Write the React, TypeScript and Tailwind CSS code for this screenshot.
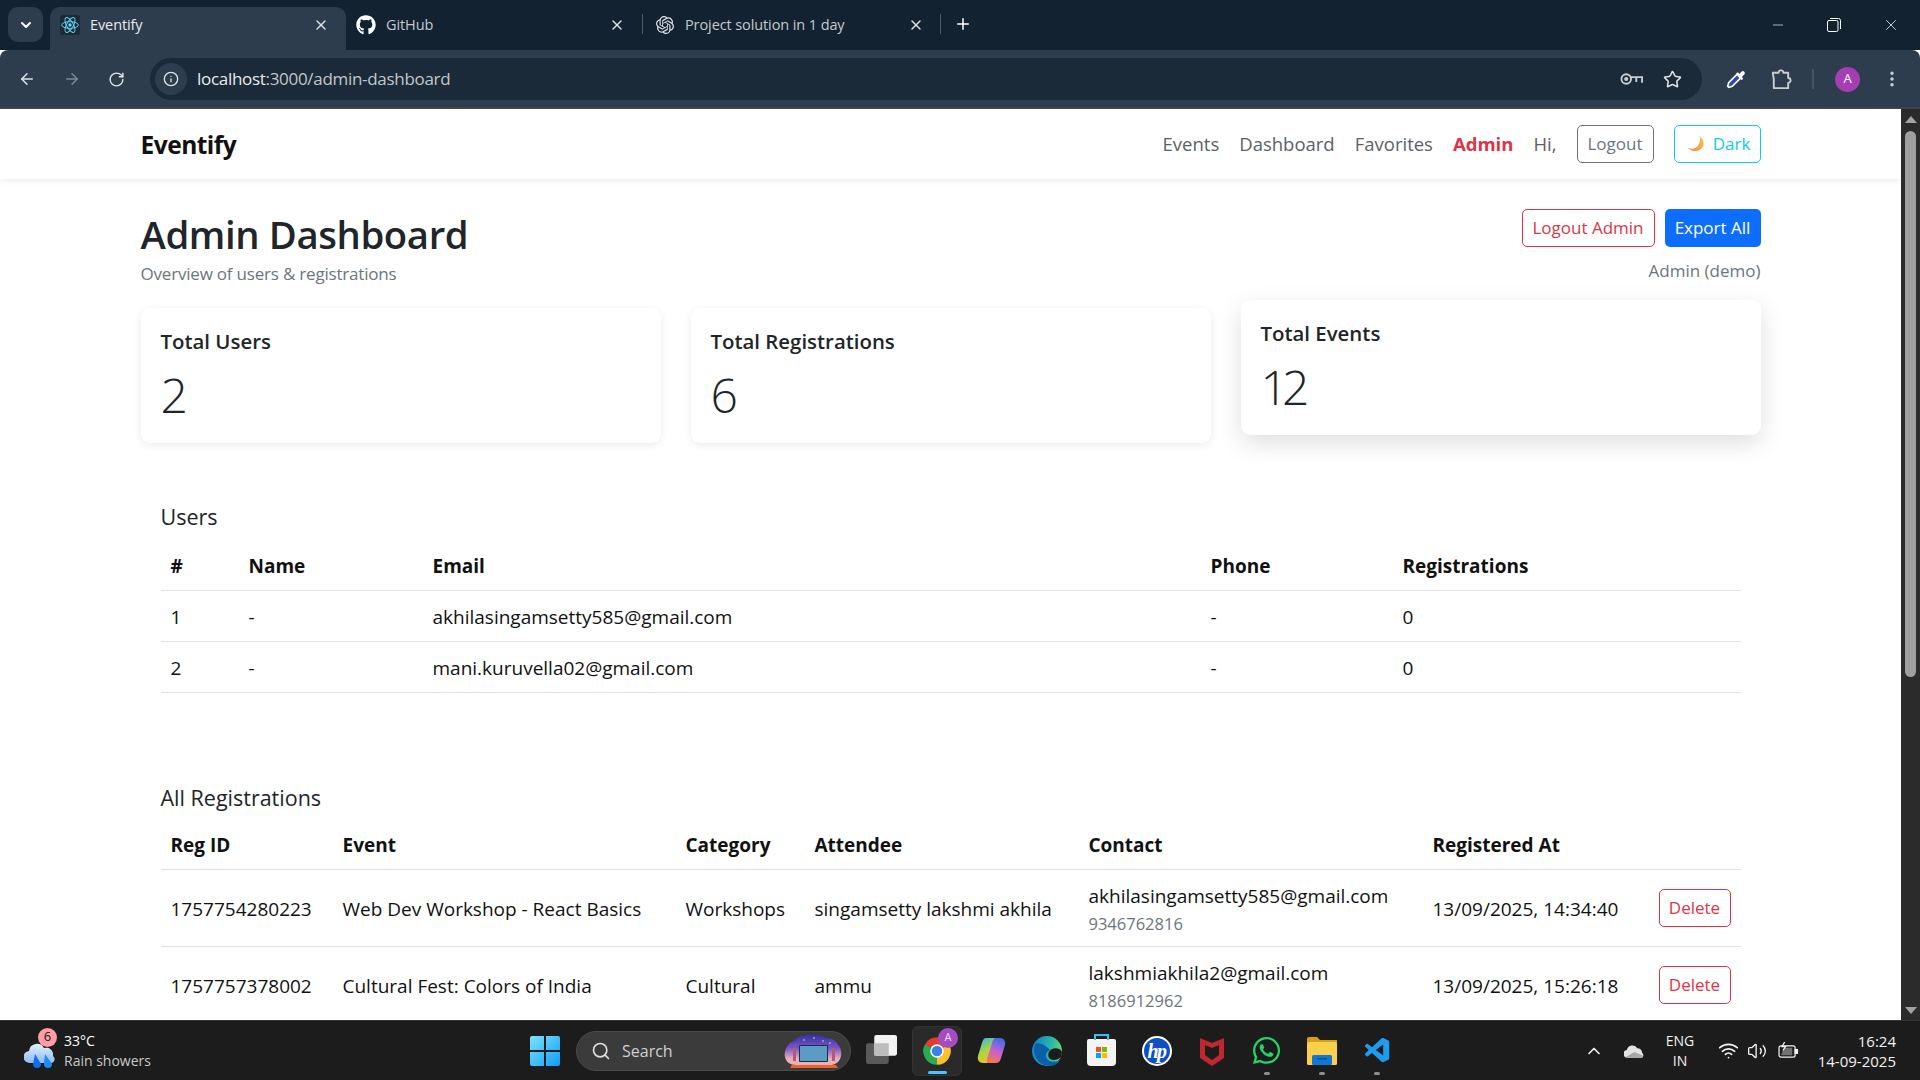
import React from 'react';
import { ArrowLeft, ArrowRight, RotateCw, Info, Star, EllipsisVertical, Plus, X, ChevronDown, ChevronUp, Minus, Search, Wifi, Volume2 } from 'lucide-react';
import { FaGithub, FaWhatsapp } from 'react-icons/fa';
import { SiOpenai } from 'react-icons/si';
import { VscVscode } from 'react-icons/vsc';

const users = [
  { id: 1, name: '-', email: 'akhilasingamsetty585@gmail.com', phone: '-', regs: 0 },
  { id: 2, name: '-', email: 'mani.kuruvella02@gmail.com', phone: '-', regs: 0 },
];

const registrations = [
  {
    id: '1757754280223',
    event: 'Web Dev Workshop - React Basics',
    category: 'Workshops',
    attendee: 'singamsetty lakshmi akhila',
    email: 'akhilasingamsetty585@gmail.com',
    phone: '9346762816',
    at: '13/09/2025, 14:34:40',
  },
  {
    id: '1757757378002',
    event: 'Cultural Fest: Colors of India',
    category: 'Cultural',
    attendee: 'ammu',
    email: 'lakshmiakhila2@gmail.com',
    phone: '8186912962',
    at: '13/09/2025, 15:26:18',
  },
];

function ReactIcon() {
  return (
    <svg viewBox="0 0 24 24" className="w-[20px] h-[20px] bg-[#1f2933] rounded-[3px]">
      <g fill="none" stroke="#61dafb" strokeWidth="1.1">
        <ellipse cx="12" cy="12" rx="10" ry="4" />
        <ellipse cx="12" cy="12" rx="10" ry="4" transform="rotate(60 12 12)" />
        <ellipse cx="12" cy="12" rx="10" ry="4" transform="rotate(120 12 12)" />
      </g>
      <circle cx="12" cy="12" r="2" fill="#61dafb" />
    </svg>
  );
}

function Tab({ icon, title, active }: { icon: React.ReactNode; title: string; active?: boolean }) {
  return (
    <div
      className={`flex items-center h-[43px] w-[296px] pl-[10px] pr-[17px] pb-[8px] rounded-t-[10px] ${
        active ? 'bg-[#2d3d4d] text-[#e8eaed]' : 'text-[#c4c9ce]'
      }`}
    >
      <span className="w-[20px] flex justify-center">{icon}</span>
      <span className="ml-[10px] flex-1 text-[14.5px] tracking-[-0.1px]">{title}</span>
      <X size={16} strokeWidth={2} className="text-[#dfe3e6]" />
    </div>
  );
}

function BrowserChrome() {
  return (
    <div className="shrink-0">
      {/* Tab strip */}
      <div className="h-[50px] bg-[#132231] flex items-end">
        <div className="ml-[8px] mb-[8px] w-[35px] h-[35px] rounded-[10px] bg-[#2d3d4d] flex items-center justify-center text-white">
          <ChevronDown size={16} strokeWidth={3} />
        </div>
        <div className="ml-[7px]">
          <Tab active icon={<ReactIcon />} title="Eventify" />
        </div>
        <Tab icon={<FaGithub size={20} className="text-white" />} title="GitHub" />
        <div className="w-px h-[20px] bg-[#4a5967] mb-[16px] mr-[2px]" />
        <Tab icon={<SiOpenai size={18} className="text-[#e0e3e6]" />} title="Project solution in 1 day" />
        <div className="w-px h-[20px] bg-[#4a5967] mb-[16px] -ml-px" />
        <Plus size={18} strokeWidth={2} className="ml-[13px] mb-[17px] text-white" />
        <div className="ml-auto flex items-center h-full text-white">
          <Minus size={16} strokeWidth={1} className="mr-[41px]" />
          <svg viewBox="0 0 14 14" className="w-[14px] h-[14px] mr-[41px]" fill="none" stroke="white" strokeWidth="1">
            <rect x="0.5" y="2.5" width="10.5" height="11" rx="1.5" />
            <path d="M3 0.5h8.5a2 2 0 0 1 2 2V11" />
          </svg>
          <X size={18} strokeWidth={1} className="mr-[20px]" />
        </div>
      </div>
      {/* Toolbar */}
      <div className="h-[59px] bg-[#2d3d4d] border-b-2 border-[#3c4650] rounded-t-[8px] flex items-start pt-[8px] text-[#dfe3e6]">
        <div className="flex items-center h-[42px] pl-[18px] gap-[27px] w-[150px]">
          <ArrowLeft size={18} strokeWidth={2} />
          <ArrowRight size={18} strokeWidth={2} className="text-[#7d8893]" />
          <RotateCw size={17} strokeWidth={2} />
        </div>
        <div className="w-[1552px] h-[42px] rounded-full bg-[#1a2a38] flex items-center pl-[5px] pr-[20px]">
          <div className="w-[32px] h-[32px] rounded-full bg-[#2d3d4d] flex items-center justify-center">
            <Info size={16} strokeWidth={2} />
          </div>
          <span className="ml-[10px] text-[17px] tracking-[-0.3px] text-[#e8eaed]">
            localhost<span className="text-[#c2c7cc]">:3000/admin-dashboard</span>
          </span>
          <svg viewBox="0 0 24 14" className="ml-auto w-[23px] h-[14px]" fill="none" stroke="#c9cdd1" strokeWidth="2">
            <circle cx="6.5" cy="7" r="5" />
            <circle cx="6.5" cy="7" r="1.2" fill="#c9cdd1" />
            <path d="M11.5 5h11.5v6M17 5v5" />
          </svg>
          <Star size={19} strokeWidth={2} className="ml-[20px] text-[#dfe3e6]" />
        </div>
        <div className="flex items-center h-[42px] ml-[23px]">
          <svg viewBox="0 0 24 24" className="w-[22px] h-[22px]">
            <path d="M4 21l-1-1 1-4L14 6l4 4L8 20z" fill="#2f48b8" stroke="white" strokeWidth="1.8" />
            <path d="M13 5l2 2 3-3a2 2 0 0 1 3 3l-3 3 2 2-2 1-6-6z" fill="white" />
          </svg>
          <svg viewBox="0 0 24 24" className="ml-[22px] w-[23px] h-[23px]" fill="none" stroke="#c9cdd1" strokeWidth="2" strokeLinejoin="round">
            <path d="M4 5h6a2.5 2.5 0 0 1 5 0h5v5.5a2.5 2.5 0 0 1 0 5V21H5v-4a0 0 0 0 0 0 0v-5a0 0 0 0 0 0 0z" />
          </svg>
          <div className="w-[2px] h-[20px] bg-[#465563] ml-[20px]" />
          <div className="ml-[21px] w-[25px] h-[25px] rounded-full bg-[#a43fb1] text-white text-[13px] flex items-center justify-center">
            A
          </div>
          <EllipsisVertical size={20} strokeWidth={2.2} className="ml-[22px] text-[#c9cdd1]" />
        </div>
      </div>
    </div>
  );
}

function Navbar() {
  return (
    <div className="h-[70px] shrink-0 bg-white shadow-[0_2px_6px_rgba(0,0,0,0.07)] relative">
      <div className="w-[1620px] mx-auto h-full flex items-center justify-between">
        <span className="pt-[2px] text-[24.5px] font-bold text-[#111] tracking-[-0.5px]">Eventify</span>
        <div className="flex items-center text-[#5c6166] text-[18.5px]">
          <span>Events</span>
          <span className="ml-[20px]">Dashboard</span>
          <span className="ml-[20px]">Favorites</span>
          <span className="ml-[20px] font-bold text-[#dc3545]">Admin</span>
          <span className="ml-[20px]">Hi,</span>
          <button className="ml-[20px] h-[38px] w-[77px] rounded-[5px] border border-[#6c757d] text-[#6c757d] text-[17px]">
            Logout
          </button>
          <button className="ml-[20px] h-[38px] w-[87px] pl-[3px] rounded-[5px] border border-[#0dcaf0] text-[#0dcaf0] text-[17px] flex items-center justify-center gap-[8px]">
            <svg viewBox="0 0 20 20" className="w-[18px] h-[18px]">
              <defs>
                <linearGradient id="moon" x1="1" y1="0" x2="0" y2="1">
                  <stop offset="0" stopColor="#f7c24f" />
                  <stop offset="1" stopColor="#ee8f4a" />
                </linearGradient>
              </defs>
              <path d="M14 1c5 4 6 10 2 14-4 4-11 4-15-.5 5 2 9 .5 11.5-3C14.500 8 15 4.500 14 1z" fill="url(#moon)" />
            </svg>
            Dark
          </button>
        </div>
      </div>
    </div>
  );
}

function StatCard({ title, value, raised }: { title: string; value: number; raised?: boolean }) {
  return (
    <div
      className={`h-[135px] rounded-[9px] bg-white p-[20px] ${
        raised ? '-translate-y-[8px] shadow-[0_8px_24px_rgba(0,0,0,0.13)]' : 'shadow-[0_2px_8px_rgba(0,0,0,0.08)]'
      }`}
    >
      <div className="text-[20.400px] font-semibold text-[#212529] leading-[26px]">{title}</div>
      <div className="mt-[12px] text-[48px] font-light text-[#212529] leading-[58px] tracking-[-6px]">{value}</div>
    </div>
  );
}

function UsersTable() {
  return (
    <table className="w-[1580px] table-fixed text-left text-[19px] text-[#111]">
      <colgroup>
        <col className="w-[78px]" />
        <col className="w-[184px]" />
        <col className="w-[778px]" />
        <col className="w-[192px]" />
        <col />
      </colgroup>
      <thead>
        <tr className="h-[50px] border-b border-[#dee2e6]">
          <th className="px-[10px] pt-[2px] font-bold">#</th>
          <th className="px-[10px] pt-[2px] font-bold">Name</th>
          <th className="px-[10px] pt-[2px] font-bold">Email</th>
          <th className="px-[10px] pt-[2px] font-bold">Phone</th>
          <th className="px-[10px] pt-[2px] font-bold">Registrations</th>
        </tr>
      </thead>
      <tbody>
        {users.map((u) => (
          <tr key={u.id} className="h-[51px] border-b border-[#dee2e6]">
            <td className="px-[10px] pt-[3px]">{u.id}</td>
            <td className="px-[10px] pt-[3px]">{u.name}</td>
            <td className="px-[10px] pt-[3px]">{u.email}</td>
            <td className="px-[10px] pt-[3px]">{u.phone}</td>
            <td className="px-[10px] pt-[3px]">{u.regs}</td>
          </tr>
        ))}
      </tbody>
    </table>
  );
}

function RegistrationsTable() {
  return (
    <table className="w-[1580px] table-fixed text-left text-[19px] text-[#111]">
      <colgroup>
        <col className="w-[172px]" />
        <col className="w-[343px]" />
        <col className="w-[129px]" />
        <col className="w-[274px]" />
        <col className="w-[344px]" />
        <col className="w-[217px]" />
        <col />
      </colgroup>
      <thead>
        <tr className="h-[49px] border-b border-[#dee2e6]">
          <th className="px-[10px] font-bold">Reg ID</th>
          <th className="px-[10px] font-bold">Event</th>
          <th className="px-[10px] font-bold">Category</th>
          <th className="px-[10px] font-bold">Attendee</th>
          <th className="px-[10px] font-bold">Contact</th>
          <th className="px-[10px] font-bold">Registered At</th>
          <th />
        </tr>
      </thead>
      <tbody>
        {registrations.map((r) => (
          <tr key={r.id} className="h-[77px] border-b border-[#dee2e6]">
            <td className="px-[10px] pt-[3px]">{r.id}</td>
            <td className="px-[10px] pt-[3px] whitespace-nowrap">{r.event}</td>
            <td className="px-[10px] pt-[3px]">{r.category}</td>
            <td className="px-[10px] pt-[3px] whitespace-nowrap">{r.attendee}</td>
            <td className="px-[10px] pt-[3px]">
              <div className="leading-[28px] whitespace-nowrap">{r.email}</div>
              <div className="leading-[28px] text-[16.500px] text-[#6c757d]">{r.phone}</div>
            </td>
            <td className="px-[10px] pt-[3px] whitespace-nowrap">{r.at}</td>
            <td className="pl-[19px]">
              <button className="w-[72px] h-[38px] rounded-[5px] border border-[#dc3545] text-[#dc3545] text-[17px]">
                Delete
              </button>
            </td>
          </tr>
        ))}
      </tbody>
    </table>
  );
}

function Scrollbar() {
  return (
    <div className="w-[19px] shrink-0 bg-[#2b2b2b] flex flex-col items-center">
      <div className="mt-[7px] w-0 h-0 border-x-[6px] border-x-transparent border-b-[7px] border-b-[#a3a3a3]" />
      <div className="mt-[8px] w-[11px] h-[546px] rounded-full bg-[#9f9f9f]" />
      <div className="mt-auto mb-[6px] w-0 h-0 border-x-[6px] border-x-transparent border-t-[7px] border-t-[#a3a3a3]" />
    </div>
  );
}

function WeatherIcon() {
  return (
    <div className="relative w-[34px] h-[40px]">
      <svg viewBox="0 0 34 30" className="absolute left-0 bottom-0 w-[34px] h-[30px]">
        <defs>
          <linearGradient id="cloud" x1="0" y1="0" x2="0" y2="1">
            <stop offset="0" stopColor="#e4eefb" />
            <stop offset="1" stopColor="#8cbcf2" />
          </linearGradient>
        </defs>
        <path d="M6 22a6 6 0 0 1-1-12 8 8 0 0 1 15-3 7 7 0 0 1 9 8 4 4 0 0 1-1 7z" fill="url(#cloud)" />
        <path d="M11 13l6 10a4 4 0 1 1-8 0z" fill="#0f6fe8" />
        <path d="M21 13l7 10a4 4 0 1 1-8 0z" fill="#1d8bf5" />
      </svg>
      <div className="absolute -top-[3px] left-[14px] w-[19px] h-[19px] rounded-full bg-[#ff9ca6] text-[#1a1a1a] text-[13px] flex items-center justify-center">
        6
      </div>
    </div>
  );
}

function TvArt() {
  return (
    <svg viewBox="0 0 60 36" className="w-[60px] h-[36px]">
      <defs>
        <linearGradient id="night" x1="0" y1="0" x2="0" y2="1">
          <stop offset="0" stopColor="#2f2fa0" />
          <stop offset="0.45" stopColor="#7a55c8" />
          <stop offset="0.8" stopColor="#e8b0b8" />
        </linearGradient>
      </defs>
      <path d="M6 10c6-2 8-8 16-8 6-2 14 0 20 3 6 0 10 2 12 7 4 4 4 10 2 14-2 4-6 6-10 6H12c-6 0-10-3-11-8-1-5 1-10 5-14z" fill="url(#night)" />
      <g fill="#f3d9a0">
        <circle cx="20" cy="7" r="0.8" />
        <circle cx="30" cy="5" r="0.8" />
        <circle cx="39" cy="8" r="0.8" />
        <circle cx="46" cy="10" r="0.8" />
      </g>
      <rect x="9" y="15" width="3" height="13" fill="#b05a78" />
      <rect x="48" y="15" width="3" height="13" fill="#b05a78" />
      <rect x="15" y="12" width="29" height="17" rx="1" fill="#1d2c40" />
      <rect x="16" y="13" width="27" height="15" fill="#5b9cc4" />
      <path d="M8 32h44l2 3H6z" fill="#f0622a" />
    </svg>
  );
}

function Slot({ children, dot }: { children: React.ReactNode; dot?: boolean }) {
  return (
    <div className="relative w-[55px] h-[50px] flex items-center justify-center">
      {children}
      {dot && <span className="absolute bottom-[1px] w-[6px] h-[3px] rounded-full bg-[#8e8e8e]" />}
    </div>
  );
}

function Taskbar() {
  return (
    <div className="h-[60px] shrink-0 bg-[#1c1c1c] border-t border-[#333] flex items-center text-white">
      <div className="w-[530px] pl-[24px] flex items-center">
        <WeatherIcon />
        <div className="ml-[6px] text-[14px] leading-[20px]">
          <div>33°C</div>
          <div className="text-[#c9c9c9]">Rain showers</div>
        </div>
      </div>
      <svg viewBox="0 0 30 30" className="w-[30px] h-[30px]">
        <defs>
          <linearGradient id="win" x1="0" y1="0" x2="1" y2="1">
            <stop offset="0" stopColor="#7de3ff" />
            <stop offset="1" stopColor="#0f9cf5" />
          </linearGradient>
        </defs>
        <path d="M0 2a2 2 0 0 1 2-2h12v14H0zM16 0h12a2 2 0 0 1 2 2v12H16zM0 16h14v14H2a2 2 0 0 1-2-2zM16 16h14v12a2 2 0 0 1-2 2H16z" fill="url(#win)" />
      </svg>
      <div className="ml-[16px] w-[275px] h-[40px] rounded-full bg-[#3b3b3b] border border-[#4b4b4b] flex items-center pl-[14px] pr-[6px]">
        <Search size={20} strokeWidth={2} className="text-[#dedede]" />
        <span className="ml-[11px] text-[16px] text-[#d0d0d0] flex-1">Search</span>
        <TvArt />
      </div>
      <svg viewBox="0 0 30 30" className="ml-[15px] w-[31px] h-[31px]">
        <rect x="0" y="8" width="22" height="20" rx="2" fill="#5a5a5a" />
        <rect x="8" y="0" width="22" height="20" rx="2" fill="#f2f2f2" />
        <rect x="8" y="8" width="14" height="12" fill="#bdbdbd" />
      </svg>
      <div className="ml-[15px] flex items-center">
        <div className="relative w-[50px] h-[50px] rounded-[6px] bg-[#2a2a2a] border border-[#333] flex items-center justify-center mr-[2px]">
          <svg viewBox="0 0 24 24" className="w-[30px] h-[30px]">
            <path d="M12 12L2.47 6.5A11 11 0 0 1 21.53 6.5z" fill="#e33b2e" />
            <path d="M12 12L21.53 6.5A11 11 0 0 1 12 23z" fill="#fbc02d" />
            <path d="M12 12L12 23A11 11 0 0 1 2.47 6.5z" fill="#2da94f" />
            <circle cx="12" cy="12" r="5.4" fill="white" />
            <circle cx="12" cy="12" r="4.2" fill="#3b82e8" />
          </svg>
          <span className="absolute top-[1px] right-[3px] w-[20px] h-[20px] rounded-full bg-[#a44cc2] text-[11px] text-[#f3d9fb] flex items-center justify-center">
            A
          </span>
          <span className="absolute bottom-[1px] w-[19px] h-[3px] rounded-full bg-[#4cc2ff]" />
        </div>
        <Slot>
          <svg viewBox="0 0 28 28" className="w-[29px] h-[29px]">
            <defs>
              <linearGradient id="cop1" x1="0.2" y1="0" x2="0.6" y2="1">
                <stop offset="0" stopColor="#36b9e8" />
                <stop offset="0.5" stopColor="#a9d63f" />
                <stop offset="1" stopColor="#f5c02e" />
              </linearGradient>
              <linearGradient id="cop2" x1="0.6" y1="0" x2="0.3" y2="1">
                <stop offset="0" stopColor="#3f6fe0" />
                <stop offset="0.5" stopColor="#c35fd8" />
                <stop offset="1" stopColor="#f77a4a" />
              </linearGradient>
            </defs>
            <path d="M9 2h7c2 0 3 1 2.500 3L13 23c-.6 2-2 3-4 3H6c-4 0-6-3-5-7L5 6c.8-2.500 2-4 4-4z" fill="url(#cop1)" />
            <path d="M19 26h-7c-2 0-3-1-2.500-3L15 5c.6-2 2-3 4-3h3c4 0 6 3 5 7l-4 13c-.8 2.500-2 4-4 4z" fill="url(#cop2)" />
          </svg>
        </Slot>
        <Slot>
          <svg viewBox="0 0 30 30" className="w-[30px] h-[30px]">
            <defs>
              <linearGradient id="edge" x1="0" y1="0.3" x2="1" y2="0.5">
                <stop offset="0" stopColor="#0f7fd0" />
                <stop offset="0.6" stopColor="#27b7a8" />
                <stop offset="1" stopColor="#66d76a" />
              </linearGradient>
            </defs>
            <circle cx="15" cy="15" r="15" fill="url(#edge)" />
            <path d="M3 8C0 18 6 30 17 30c5 0 9-2 11-6-6 3-14 2-14-5 0-3 2-4 4-5C13 9 7 6 3 8z" fill="#0b5ea8" />
            <path d="M30 16c-1-3-6-5-10-3-4 2-5 7-2 10 3 2 8 1 11-2z" fill="#1c1c1c" />
          </svg>
        </Slot>
        <Slot>
          <div className="relative w-[29px] h-[27px] mt-[3px] rounded-b-[4px] rounded-t-[2px] bg-[#f4f4f4] grid grid-cols-2 gap-[1px] place-content-center justify-center">
            <span className="absolute -top-[5px] left-[7px] w-[15px] h-[6px] border-2 border-b-0 border-[#35c1f1]" />
            <span className="w-[5px] h-[5px] bg-[#f25022] justify-self-end" />
            <span className="w-[5px] h-[5px] bg-[#7fba00]" />
            <span className="w-[5px] h-[5px] bg-[#00a4ef] justify-self-end" />
            <span className="w-[5px] h-[5px] bg-[#ffb900]" />
          </div>
        </Slot>
        <Slot>
          <div className="w-[30px] h-[30px] rounded-full bg-[#0f4fc4] border-2 border-white flex items-center justify-center text-white text-[20px] font-bold italic tracking-[-1.500px] font-['Liberation_Serif',serif]">
            hp
          </div>
        </Slot>
        <Slot>
          <svg viewBox="0 0 24 30" className="w-[24px] h-[30px]">
            <path d="M0 2l12 5 12-5v20l-12 8-12-8z" fill="#c1272d" />
            <path d="M5 9l7 3 7-3v10l-7 5-7-5z" fill="#1c1c1c" />
          </svg>
        </Slot>
        <Slot dot>
          <FaWhatsapp size={31} className="text-[#25d366]" />
        </Slot>
        <Slot dot>
          <svg viewBox="0 0 30 28" className="w-[30px] h-[28px]">
            <path d="M0 2a2 2 0 0 1 2-2h8l3 3h17v5H0z" fill="#d9a013" />
            <rect x="0" y="5" width="30" height="23" rx="1.5" fill="#fccf4d" />
            <rect x="5" y="18" width="20" height="10" rx="1.5" fill="#0f78d4" />
            <rect x="10" y="21" width="10" height="1.500" fill="#0b4f94" />
          </svg>
        </Slot>
        <Slot dot>
          <span className="ml-[2px] flex">
            <VscVscode size={30} className="text-[#1f9cf0]" />
          </span>
        </Slot>
      </div>
      <div className="ml-auto flex items-center pr-[24px]">
        <ChevronUp size={20} strokeWidth={2} className="text-[#f2f2f2]" />
        <svg viewBox="0 0 22 14" className="ml-[20px] w-[21px] h-[14px]">
          <path d="M4 14a4 4 0 0 1-1-8 6 6 0 0 1 11-2 5 5 0 0 1 5 5 3 3 0 0 1 0 5z" fill="#e3e3e3" />
          <path d="M2 13l9-5 9 4-1 2H4z" fill="#a8a8a8" />
        </svg>
        <div className="ml-[19px] w-[32px] text-center text-[14px] leading-[20px] text-[#f2f2f2]">
          <div>ENG</div>
          <div>IN</div>
        </div>
        <Wifi size={21} strokeWidth={2} className="ml-[22px] text-[#f2f2f2]" />
        <Volume2 size={20} strokeWidth={1.6} className="ml-[8px] text-[#f2f2f2]" />
        <svg viewBox="0 0 22 18" className="ml-[11px] w-[21px] h-[17px]" fill="none" stroke="#f2f2f2" strokeWidth="1.3">
          <rect x="1" y="4" width="17" height="12" rx="2" />
          <rect x="18" y="8" width="2.500" height="4" fill="#f2f2f2" />
          <path d="M3 14l3-8h9v8z" fill="#f2f2f2" stroke="none" opacity="0.4" />
          <path d="M7 0L4 5h4L5 9" />
        </svg>
        <div className="ml-[17px] w-[80px] text-right text-[15px] leading-[20px] text-[#f2f2f2] whitespace-nowrap">
          <div>16:24</div>
          <div>14-09-2025</div>
        </div>
      </div>
    </div>
  );
}

export default function App() {
  return (
    <div className="w-[1920px] h-[1080px] overflow-hidden flex flex-col bg-white font-['Open_Sans',sans-serif]">
      <BrowserChrome />
      <div className="flex-1 min-h-0 flex">
        <div className="flex-1 min-w-0 flex flex-col overflow-hidden">
          <Navbar />
          <div className="w-[1620px] mx-auto pt-[30px]">
            {/* Page header */}
            <div className="flex justify-between h-[99px]">
              <div>
                <h1 className="text-[38.300px] font-semibold text-[#212529] leading-[50px] tracking-[-0.4px]">Admin Dashboard</h1>
                <p className="mt-[3px] text-[17px] text-[#6c757d] leading-[24px] tracking-[-0.2px]">Overview of users &amp; registrations</p>
              </div>
              <div className="flex flex-col items-end">
                <div className="flex gap-[10px]">
                  <button className="w-[133px] h-[38px] rounded-[5px] border border-[#dc3545] text-[#dc3545] text-[17px]">
                    Logout Admin
                  </button>
                  <button className="w-[96px] h-[38px] rounded-[5px] bg-[#0d6efd] text-white text-[17px]">Export All</button>
                </div>
                <span className="mt-[11px] text-[17px] text-[#6c757d]">Admin (demo)</span>
              </div>
            </div>

            {/* Stat cards */}
            <div className="grid grid-cols-3 gap-[30px]">
              <StatCard title="Total Users" value={2} />
              <StatCard title="Total Registrations" value={6} />
              <StatCard title="Total Events" value={12} raised />
            </div>

            <div className="px-[20px]">
              <h2 className="mt-[61px] mb-[10px] text-[21.500px] font-medium text-[#212529] leading-[26px]">Users</h2>
              <UsersTable />
              <h2 className="mt-[92px] mb-[10px] text-[21.500px] font-medium text-[#212529] leading-[26px]">All Registrations</h2>
              <RegistrationsTable />
            </div>
          </div>
        </div>
        <Scrollbar />
      </div>
      <Taskbar />
    </div>
  );
}
